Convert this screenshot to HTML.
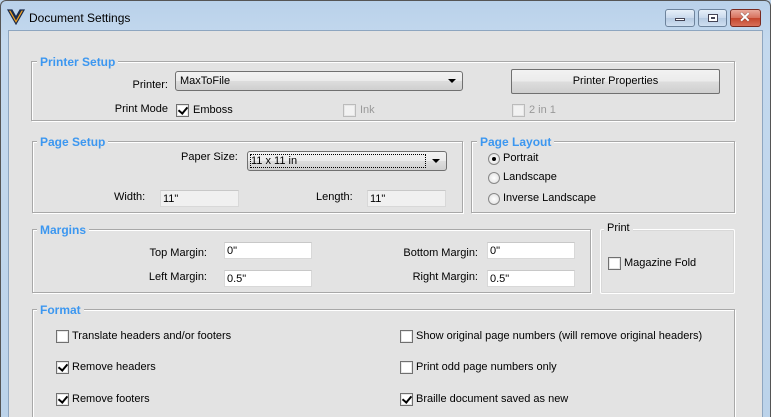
<!DOCTYPE html>
<html><head><style>
*{margin:0;padding:0;box-sizing:border-box}
html,body{width:771px;height:417px;overflow:hidden}
body{background:#bcd3ea;font-family:"Liberation Sans",sans-serif;font-size:11px;color:#000;position:relative}
.a{position:absolute;white-space:nowrap}
#frame{position:absolute;left:0;top:0;width:771px;height:417px;background:linear-gradient(#b9d1ea,#c4d9ee 40px,#bcd3ea);border:1px solid #555;border-bottom:none;border-radius:6px 6px 0 0}
#client{position:absolute;left:8px;top:30px;width:755px;height:387px;background:#e3e3e3;border:1px solid #8ea6c0;border-bottom:none}
.g{position:absolute;border:1px solid #a8a8a8;box-shadow:inset 1px 1px 0 #fff,1px 1px 0 #fff}
.lg{position:absolute;background:#e3e3e3;color:#3c97f0;font-weight:bold;font-size:12px;padding:0 3px;line-height:14px}
.cb{position:absolute;width:13px;height:13px;border:1px solid #707070;background:#fff;box-shadow:inset 0 0 0 1px #e6e6e6}
.cb.c::after{content:"";position:absolute;left:3px;top:0px;width:4px;height:7px;border:solid #000;border-width:0 2px 2px 0;transform:rotate(40deg)}
.cb.d{border-color:#bbb;background:#f2f2f2}
.rd{position:absolute;width:12px;height:12px;border-radius:50%;border:1px solid #888;background:radial-gradient(#fff,#ddd)}
.rd.c::after{content:"";position:absolute;left:3px;top:3px;width:4px;height:4px;border-radius:50%;background:#000}
.in{position:absolute;background:#fff;border:1px solid #d8d8d8;border-top-color:#c8c8c8;padding:1px 2px;line-height:14px}
.in.ro{background:#f0f0f0}
.r{text-align:right}
.cmb{position:absolute;border:1px solid #707070;border-radius:3px;background:linear-gradient(#f2f2f2,#ebebeb 50%,#dddddd 51%,#cfcfcf);padding:2px 4px;line-height:14px;white-space:nowrap;overflow:hidden}
.arr{position:absolute;right:6px;top:7px;width:0;height:0;border-left:4px solid transparent;border-right:4px solid transparent;border-top:4px solid #000}
.wb{position:absolute;top:9px;height:18px;border:1px solid #6d839c;border-radius:3px;background:linear-gradient(#e6eff9,#c9d9ec 50%,#b6cae2 51%,#cfdff1)}
</style></head><body>
<div id="frame"></div>
<svg class="a" style="left:7px;top:9px" width="18" height="16" viewBox="0 0 18 16"><path d="M1 1 L9 15 L17 1 L13 1 L9 8 L5 1 Z" fill="#f0a020" stroke="#1a2a4a" stroke-width="1.2"/><path d="M4 1 L9 10 L14 1" fill="none" stroke="#1a2a4a" stroke-width="1.5"/></svg>
<div class="a" style="left:29px;top:11px;font-size:12px">Document Settings</div>
<div class="wb" style="left:665px;width:30px"><div style="position:absolute;left:9px;top:8px;width:10px;height:3px;background:#fff;border:1px solid #445"></div></div>
<div class="wb" style="left:698px;width:29px"><div style="position:absolute;left:9px;top:4px;width:10px;height:8px;background:#fff;border:1px solid #445;box-shadow:inset 0 0 0 2px #fff,inset 0 0 0 3px #445"></div></div>
<div class="wb" style="left:730px;width:31px;border-color:#7a2a20;background:linear-gradient(#e9a99b,#d7705c 50%,#c4452c 51%,#d8705a)"><div style="position:absolute;left:8px;top:-1px;color:#fff;font-weight:bold;font-size:14px;text-shadow:0 0 1px #333">✕</div></div>
<div id="client"></div>

<div class="g" style="left:31px;top:61px;width:704px;height:60px"></div>
<div class="lg" style="left:37px;top:55px">Printer Setup</div>
<div class="a r" style="left:100px;width:68px;top:79px">Printer:</div>
<div class="cmb" style="left:175px;top:71px;width:288px;height:20px">MaxToFile<div class="arr"></div></div>
<div class="a" style="left:511px;top:69px;width:209px;height:25px;border:1px solid #707070;background:linear-gradient(#f2f2f2,#ebebeb 50%,#dddddd 51%,#cfcfcf);text-align:center;line-height:23px;border-radius:2px">Printer Properties</div>
<div class="a r" style="left:100px;width:68px;top:103px">Print Mode</div>
<div class="cb c" style="left:176px;top:104px"></div><div class="a" style="left:193px;top:104px">Emboss</div>
<div class="cb d" style="left:343px;top:104px"></div><div class="a" style="left:360px;top:104px;color:#999">Ink</div>
<div class="cb d" style="left:512px;top:104px"></div><div class="a" style="left:529px;top:104px;color:#999">2 in 1</div>

<div class="g" style="left:32px;top:141px;width:431px;height:72px"></div>
<div class="lg" style="left:37px;top:135px">Page Setup</div>
<div class="a" style="left:181px;top:151px">Paper Size:</div>
<div class="cmb" style="left:247px;top:151px;width:200px;height:20px"><span style="display:inline-block;width:176px;border:1px dotted #000;margin-left:-2px;line-height:12px">11 x 11 in</span><div class="arr"></div></div>
<div class="a" style="left:114px;top:191px">Width:</div>
<div class="in ro" style="left:160px;top:190px;width:79px;height:17px">11"</div>
<div class="a" style="left:316px;top:191px">Length:</div>
<div class="in ro" style="left:367px;top:190px;width:79px;height:17px">11"</div>

<div class="g" style="left:471px;top:141px;width:264px;height:72px"></div>
<div class="lg" style="left:477px;top:135px">Page Layout</div>
<div class="rd c" style="left:488px;top:153px"></div><div class="a" style="left:503px;top:152px">Portrait</div>
<div class="rd" style="left:488px;top:172px"></div><div class="a" style="left:503px;top:171px">Landscape</div>
<div class="rd" style="left:488px;top:193px"></div><div class="a" style="left:503px;top:192px">Inverse Landscape</div>

<div class="g" style="left:32px;top:229px;width:559px;height:64px"></div>
<div class="lg" style="left:37px;top:223px">Margins</div>
<div class="a r" style="left:120px;width:87px;top:247px">Top Margin:</div>
<div class="in" style="left:224px;top:242px;width:88px;height:17px">0"</div>
<div class="a r" style="left:120px;width:87px;top:271px">Left Margin:</div>
<div class="in" style="left:224px;top:270px;width:88px;height:17px">0.5"</div>
<div class="a r" style="left:380px;width:98px;top:247px">Bottom Margin:</div>
<div class="in" style="left:487px;top:242px;width:88px;height:17px">0"</div>
<div class="a r" style="left:380px;width:98px;top:271px">Right Margin:</div>
<div class="in" style="left:487px;top:270px;width:88px;height:17px">0.5"</div>

<div class="g" style="left:600px;top:229px;width:135px;height:65px;border-color:#fff;box-shadow:0 0 0 1px #d8d8d8 inset;border-radius:2px"></div>
<div class="a" style="left:604px;top:222px;background:#e3e3e3;padding:0 3px">Print</div>
<div class="cb" style="left:608px;top:257px"></div><div class="a" style="left:624px;top:257px">Magazine Fold</div>

<div class="g" style="left:32px;top:309px;width:703px;height:110px"></div>
<div class="lg" style="left:37px;top:303px">Format</div>
<div class="cb" style="left:56px;top:330px"></div><div class="a" style="left:72px;top:330px">Translate headers and/or footers</div>
<div class="cb c" style="left:56px;top:361px"></div><div class="a" style="left:72px;top:361px">Remove headers</div>
<div class="cb c" style="left:56px;top:393px"></div><div class="a" style="left:72px;top:393px">Remove footers</div>
<div class="cb" style="left:400px;top:330px"></div><div class="a" style="left:416px;top:330px">Show original page numbers (will remove original headers)</div>
<div class="cb" style="left:400px;top:361px"></div><div class="a" style="left:416px;top:361px">Print odd page numbers only</div>
<div class="cb c" style="left:400px;top:393px"></div><div class="a" style="left:416px;top:393px">Braille document saved as new</div>
</body></html>
